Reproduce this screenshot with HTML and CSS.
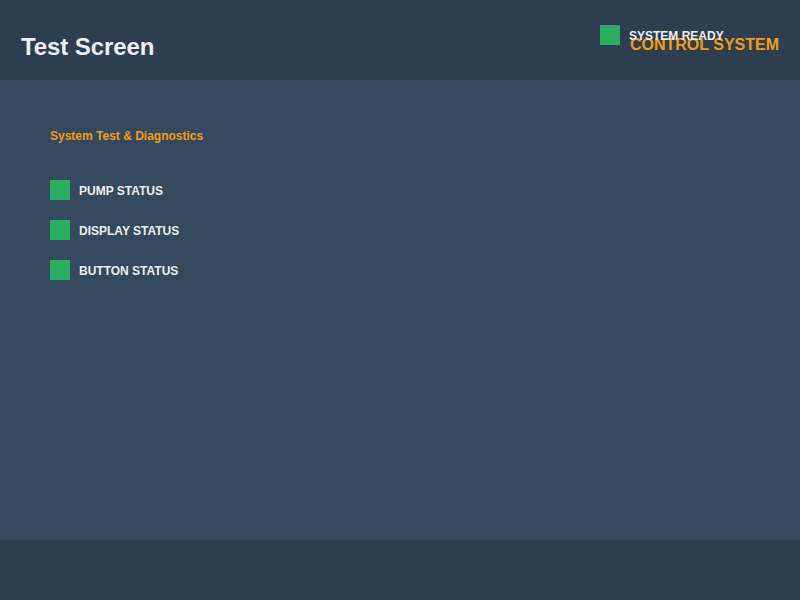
FILE: index.html
```html
<!DOCTYPE html>
<html>
<head>
<meta charset="utf-8">
<link rel="stylesheet" href="styles.css">
</head>
<body>
<div class="screen">
  <header class="header">
    <h1 class="title">Test Screen</h1>
    <div class="brand">CONTROL SYSTEM</div>
    <div class="status">
      <span class="led"></span>
      <span class="status-text">SYSTEM READY</span>
    </div>
  </header>
  <main class="main">
    <h2 class="section-title">System Test &amp; Diagnostics</h2>
    <ul class="checks">
      <li class="check"><span class="led"></span><span class="check-label">PUMP STATUS</span></li>
      <li class="check"><span class="led"></span><span class="check-label">DISPLAY STATUS</span></li>
      <li class="check"><span class="led"></span><span class="check-label">BUTTON STATUS</span></li>
    </ul>
  </main>
  <footer class="footer"></footer>
</div>
</body>
</html>
```
FILE: styles.css
```css
* { box-sizing: border-box; }
html, body { margin: 0; padding: 0; }
body {
  font-family: "Liberation Sans", Arial, sans-serif;
  color: #ecf0f1;
  background: #34495e;
}
.screen {
  width: 800px;
  height: 600px;
  display: flex;
  flex-direction: column;
}
.header {
  position: relative;
  height: 80px;
  background: #2c3e50;
  display: flex;
  align-items: center;
  justify-content: space-between;
  padding: 14px 21px 0 21px;
}
.title {
  margin: 0;
  font-size: 24px;
  font-weight: bold;
  color: #ecf0f1;
  line-height: 28px;
  letter-spacing: -0.1px;
}
.brand {
  font-size: 16px;
  font-weight: bold;
  color: #f39c12;
  line-height: 18px;
  margin-bottom: 5px;
}
.status {
  position: absolute;
  top: 25px;
  left: 600px;
  display: flex;
  align-items: center;
  gap: 9px;
}
.led {
  display: block;
  width: 20px;
  height: 20px;
  background: #27ae60;
  flex: none;
}
.status-text {
  font-size: 12px;
  font-weight: bold;
  color: #ecf0f1;
  line-height: 14px;
  padding-top: 2px;
}
.main {
  flex: 1;
  background: #34495e;
  padding: 49px 50px;
}
.section-title {
  margin: 0;
  font-size: 12px;
  font-weight: bold;
  color: #f39c12;
  line-height: 14px;
}
.checks {
  list-style: none;
  margin: 37px 0 0;
  padding: 0;
  display: flex;
  flex-direction: column;
  gap: 20px;
}
.check {
  display: flex;
  align-items: center;
  gap: 9px;
  height: 20px;
}
.check-label {
  font-size: 12px;
  font-weight: bold;
  color: #ecf0f1;
  line-height: 14px;
  padding-top: 2px;
}
.footer {
  height: 60px;
  background: #2c3e50;
}
```
